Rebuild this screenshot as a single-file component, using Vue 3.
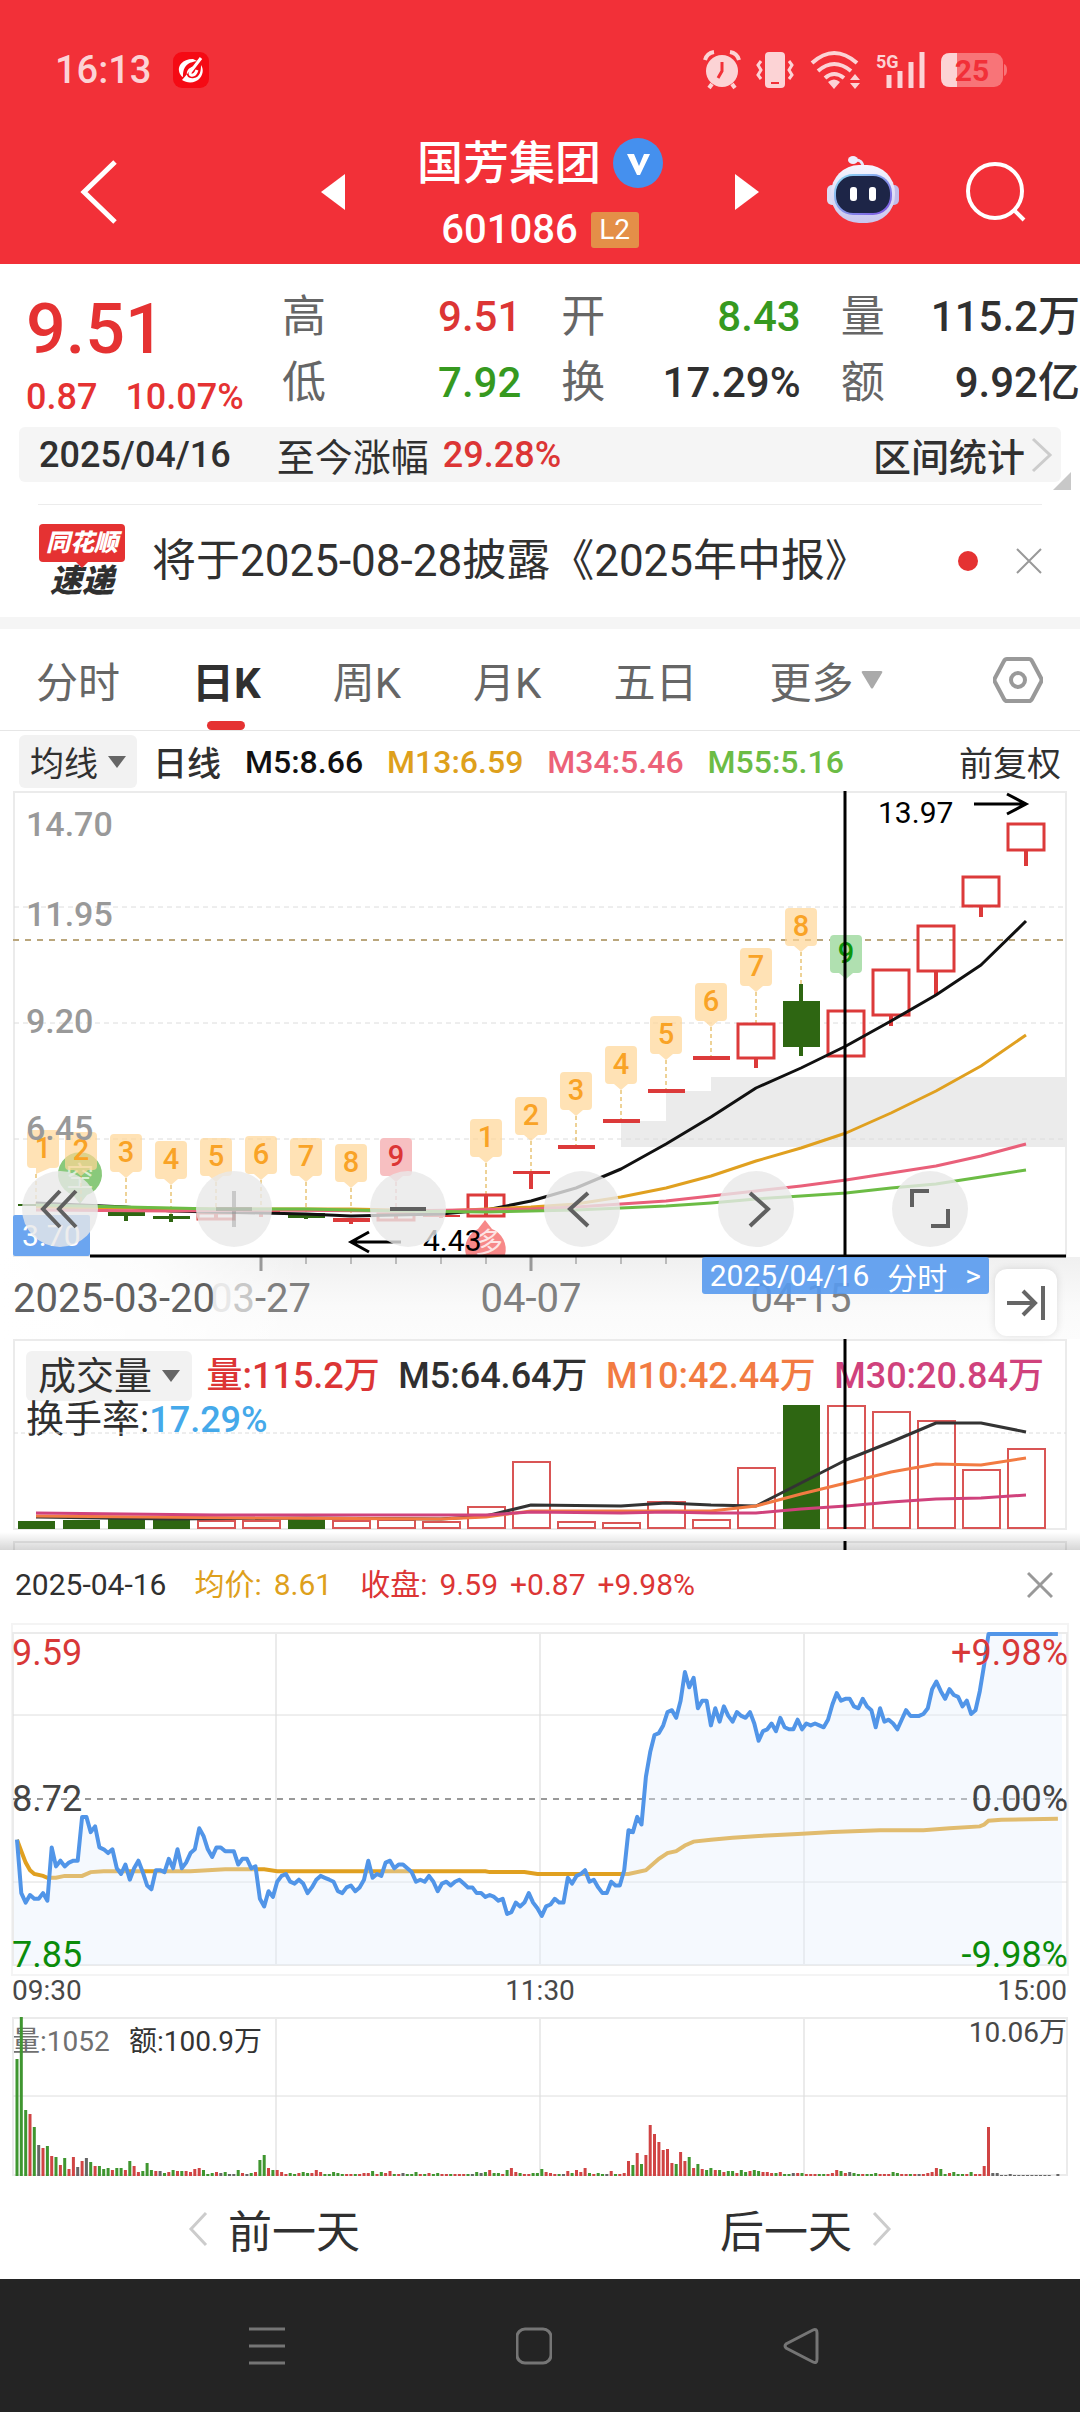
<script setup>
import { ref } from 'vue'

const tabs = ['分时', '日K', '周K', '月K', '五日']
const activeTab = ref('日K')

const quotes = [
  { label: '高', value: '9.51', tone: 'up' },
  { label: '开', value: '8.43', tone: 'down' },
  { label: '量', value: '115.2万', tone: '' },
  { label: '低', value: '7.92', tone: 'down' },
  { label: '换', value: '17.29%', tone: '' },
  { label: '额', value: '9.92亿', tone: '' },
]

const RED = '#dc3a3a'
const GREEN = '#2e6612'
const cx = (i) => 36 + i * 45

// Daily candles: kind, body top, body bottom, wick top, wick bottom
const candles = [
  ['g', 1204, 1206, 1204, 1206], ['g', 1206, 1209, 1206, 1210], ['g', 1211, 1216, 1211, 1221],
  ['g', 1216, 1219, 1214, 1222], ['r', 1213, 1219, 1213, 1219], ['f', 1210, 1212, 1210, 1217],
  ['g', 1213, 1218, 1213, 1219], ['f', 1218, 1222, 1218, 1224], ['r', 1214, 1220, 1214, 1220],
  ['f', 1215, 1217, 1215, 1218], ['r', 1195, 1216, 1195, 1216], ['f', 1171, 1174, 1171, 1189],
  ['f', 1145, 1149, 1145, 1149], ['f', 1119, 1123, 1119, 1123], ['f', 1089, 1093, 1089, 1093],
  ['f', 1056, 1060, 1056, 1060], ['r', 1024, 1058, 1058, 1068], ['g', 1001, 1047, 984, 1056],
  ['r', 1011, 1056, 1056, 1057], ['r', 970, 1015, 1015, 1026], ['r', 926, 971, 971, 995],
  ['r', 877, 906, 906, 917], ['r', 824, 850, 850, 866],
]

const toPoints = (pairs) => pairs.map(([i, y]) => `${cx(i)},${y}`).join(' ')
const averages = [
  { color: '#111', pts: [[0, 1203], [2, 1207], [3, 1211], [5, 1213], [6, 1214], [7, 1216], [8, 1215], [9, 1214], [10, 1210], [11, 1201], [12, 1188], [13, 1169], [14, 1144], [15, 1117], [16, 1088], [17, 1068], [18, 1046], [19, 1021], [20, 995], [21, 965], [22, 921]] },
  { color: '#e0a020', pts: [[0, 1207], [4, 1209], [7, 1209], [9, 1211], [11, 1207], [12, 1204], [13, 1197], [14, 1188], [15, 1176], [16, 1161], [17, 1148], [18, 1133], [19, 1113], [20, 1091], [21, 1066], [22, 1035]] },
  { color: '#e9607a', pts: [[0, 1210], [3, 1211], [5, 1210], [8, 1211], [11, 1209], [12, 1207], [13, 1204], [14, 1201], [15, 1196], [16, 1191], [17, 1186], [18, 1180], [19, 1173], [20, 1166], [21, 1156], [22, 1144]] },
  { color: '#6cbc45', pts: [[0, 1205], [2, 1207], [4, 1209], [6, 1209], [8, 1211], [10, 1212], [12, 1210], [13, 1208], [14, 1206], [15, 1203], [16, 1199], [17, 1196], [18, 1193], [19, 1188], [20, 1184], [21, 1177], [22, 1170]] },
].map((a) => ({ color: a.color, points: toPoints(a.pts) }))

// Nine-turn markers: candle index, number, bubble top, stem end, tone
const marks = [
  [0, 1, 1130, 1204, 'o'], [1, 2, 1132, 1206, 'o'], [2, 3, 1134, 1209, 'o'], [3, 4, 1141, 1215, 'o'],
  [4, 5, 1138, 1212, 'o'], [5, 6, 1136, 1210, 'o'], [6, 7, 1138, 1212, 'o'], [7, 8, 1144, 1217, 'o'],
  [8, 9, 1138, 1213, 'r'], [10, 1, 1119, 1194, 'o'], [11, 2, 1097, 1171, 'o'], [12, 3, 1072, 1146, 'o'],
  [13, 4, 1046, 1120, 'o'], [14, 5, 1016, 1090, 'o'], [15, 6, 983, 1057, 'o'], [16, 7, 948, 1023, 'o'],
  [17, 8, 908, 984, 'o'], [18, 9, 935, 976, 'g'],
].map(([i, n, y, end, tone]) => ({ x: cx(i), bx: Math.max(cx(i), 43), n, y, end, tone }))

const volumes = [
  ['g', 1521], ['g', 1520], ['g', 1519], ['g', 1519], ['r', 1521], ['r', 1521], ['g', 1519], ['r', 1521],
  ['r', 1520], ['r', 1522], ['r', 1507], ['r', 1462], ['r', 1522], ['r', 1523], ['r', 1502], ['r', 1520],
  ['r', 1468], ['g', 1405], ['r', 1406], ['r', 1412], ['r', 1421], ['r', 1470], ['r', 1449],
]
const volumeAverages = [
  { color: '#333', pts: [[0, 1517], [3, 1519], [6, 1518], [9, 1519], [10, 1516], [11, 1505], [13, 1506], [14, 1503], [15, 1505], [16, 1506], [17, 1483], [18, 1460], [19, 1442], [20, 1423], [21, 1423], [22, 1432]] },
  { color: '#f27b42', pts: [[0, 1516], [5, 1518], [9, 1519], [10, 1517], [11, 1511], [13, 1511], [15, 1511], [16, 1506], [17, 1494], [18, 1483], [19, 1472], [20, 1464], [21, 1465], [22, 1458]] },
  { color: '#d0427c', pts: [[0, 1513], [4, 1515], [10, 1515], [11, 1512], [13, 1513], [14, 1512], [15, 1513], [16, 1513], [17, 1509], [18, 1506], [19, 1502], [20, 1499], [21, 1498], [22, 1495]] },
].map((a) => ({ color: a.color, points: toPoints(a.pts) }))

// Intraday price per minute, in cents
const prices = [
  851, 823, 818, 822, 820, 820, 823, 819, 847, 837, 840, 837, 839, 840, 840, 863, 863, 855, 858, 847,
  846, 844, 846, 836, 833, 838, 830, 836, 840, 834, 827, 825, 835, 835, 834, 841, 836, 846, 836, 839,
  844, 846, 857, 853, 846, 842, 847, 847, 845, 845, 845, 838, 841, 841, 836, 837, 820, 816, 824, 821,
  829, 832, 833, 829, 828, 830, 828, 823, 826, 830, 832, 831, 830, 829, 824, 823, 826, 827, 824, 826,
  830, 840, 831, 833, 832, 839, 840, 836, 838, 838, 836, 834, 829, 830, 829, 832, 829, 824, 828, 829,
  827, 829, 830, 828, 826, 826, 823, 823, 821, 822, 821, 819, 820, 812, 813, 818, 816, 818, 823, 818,
  815, 811, 816, 817, 820, 818, 818, 831, 828, 832, 833, 835, 829, 830, 826, 823, 823, 829, 827, 827,
  835, 856, 855, 863, 859, 884, 897, 906, 907, 911, 918, 919, 915, 924, 939, 931, 936, 920, 924, 924,
  911, 920, 913, 921, 916, 913, 918, 916, 915, 918, 912, 903, 908, 909, 912, 908, 915, 910, 909, 909,
  914, 909, 912, 911, 912, 911, 910, 914, 922, 928, 924, 925, 925, 921, 920, 925, 921, 919, 910, 920,
  913, 914, 912, 909, 914, 919, 916, 916, 916, 917, 920, 930, 934, 929, 925, 930, 927, 926, 921, 924,
  917, 919, 929, 943, 959, ...Array(16).fill(959),
]
const mean = [
  [0, 851], [1, 845], [2, 839], [3, 835], [4, 833], [6, 832], [7, 831], [9, 831], [11, 832], [15, 832], [17, 834],
  [20, 834.5], [40, 834.5], [48, 835.5], [57, 835.5], [60, 834.5], [108, 834.5], [109, 834], [117, 834], [120, 833],
  [141, 833], [145, 835], [148, 841], [150, 844], [152, 845], [154, 848], [156, 850], [160, 851], [165, 852],
  [171, 853], [180, 854], [188, 855], [199, 856], [209, 856], [215, 857], [222, 858], [223, 859], [224, 861],
  [227, 861.5], [240, 862],
]
const mx = (m) => +(17 + m * 4.337).toFixed(1)
const py = (cents) => +(1634 + (959 - cents) * 1.905).toFixed(1)
const priceLine = prices.map((p, m) => `${mx(m)},${py(p)}`).join(' ')
const priceArea = `14,${py(851)} ${priceLine} 1062,1634 1062,1965 14,1965`
const meanLine = mean.map(([m, p]) => `${mx(m)},${py(p)}`).join(' ')

// Volume per minute: direction and bar height
const ticks = (
  'g117 g159 g66 r62 g49 k31 r28 g30 r20 g19 r11 g18 r7 r19 k9 r15 k18 g14 r10 g10 g7 g8 r6 g8 g8 r6 g15 r10 r4 g5 ' +
  'g13 g6 r5 k5 g3 r4 g6 r5 g5 r5 r4 r7 r8 g6 g2 g3 r4 k3 g4 k2 k2 g6 r3 k2 g3 r4 g16 g21 r8 g6 ' +
  'r6 r4 r2 g3 g2 r3 g4 g3 r3 r6 r4 g2 g2 g4 g3 g2 r2 r2 g2 r2 r3 r3 g5 r2 g4 r3 r5 g2 r2 k3 ' +
  'g2 g2 g4 r2 g2 r3 g2 g3 r2 r2 g2 r2 r2 r2 g2 k2 g4 k3 g4 r6 g3 g3 r2 g6 r8 r4 g3 r2 r2 g3 ' +
  'g3 g7 r4 r3 r2 g2 k2 r5 g3 r6 r4 r8 g3 r2 g3 g2 k2 r5 g2 r2 r3 r15 g11 r23 g12 r21 r51 r42 r34 r26 ' +
  'r27 r13 g12 r24 r15 g19 r8 g12 r7 g6 g8 r6 g6 r4 g5 g5 r3 g6 g4 r5 g6 g5 r4 r4 r3 g3 r4 g2 g2 k3 ' +
  'r3 g3 r2 r2 r2 g2 g2 r2 r3 r6 g5 r3 k4 g3 g2 r2 g2 g2 g3 r2 r2 r2 g4 g3 r2 r2 g2 r2 k2 r2 ' +
  'r3 r4 r8 g7 g2 r3 g4 g2 g2 r2 g4 r2 r2 r10 r49 k3 k3 k1 k1 k2 k1 k1 k1 k1 k1 k1 k1 k1 k1 k0 k2'
).split(' ').map((t, m) => ({ x: mx(m) - 1.5, h: +t.slice(1), color: { g: '#3f9630', r: '#d04444', k: '#666' }[t[0]] }))
</script>

<template>
  <div class="page">
    <header class="top">
      <div class="status">
        <span class="clock">16:13</span>
        <svg class="app-dot" width="36" height="36" viewBox="0 0 36 36">
          <rect width="36" height="36" rx="9" fill="#f50a14" />
          <path d="M20 7C9 7 5 14 6 19s4 6 4 6-1-9 5-13c3-2 5-2 9-3M9 28c6 4 14 3 18-2s3-10 1-13c0 6-1 12-7 13-5 1-8-2-7-6s5-5 7-6" fill="#fff" />
          <path d="M28 6 18 19q-2 3 0 4 4 1 6-5" fill="none" stroke="#fff" stroke-width="3" />
        </svg>
        <div class="status-icons">
          <svg width="38" height="40" viewBox="0 0 38 40">
            <circle cx="19" cy="21" r="16" fill="#fcd3d5" />
            <path d="M2 10q2-7 9-8M36 10q-2-7-9-8M9 34l-3 4M29 34l3 4" stroke="#fcd3d5" stroke-width="4" fill="none" />
            <path d="M19 12v9l-4 7" stroke="#f23038" stroke-width="3" fill="none" />
          </svg>
          <svg width="38" height="40" viewBox="0 0 38 40">
            <rect x="9" y="2" width="20" height="36" rx="4" fill="#fcd3d5" />
            <rect x="15" y="32" width="8" height="2" fill="#f23038" />
            <path d="M5 11l-3 4 3 5-3 5 3 4M33 11l3 4-3 5 3 5-3 4" stroke="#fcd3d5" stroke-width="3" fill="none" />
          </svg>
          <svg width="52" height="40" viewBox="0 0 52 40">
            <path d="M3 13q22-20 45 0M9 21q16-14 33 0M16 28q9-8 19 0" stroke="#fcd3d5" stroke-width="4" fill="none" />
            <path d="M19 32q6-5 12 0l-6 7z" fill="#fcd3d5" />
            <path d="M41 30l5-6 5 6zM41 33l5 6 5-6z" fill="#fcd3d5" />
          </svg>
          <svg width="50" height="40" viewBox="0 0 50 40">
            <text x="0" y="18" class="five-g">5G</text>
            <path d="M13 25v13M24 21v17M35 12v26M46 2v36" stroke="#fcd3d5" stroke-width="5" />
          </svg>
          <svg width="66" height="36" viewBox="0 0 66 36">
            <rect x="0" y="1" width="62" height="34" rx="9" fill="#f87478" />
            <path d="M9 1h7v34H9q-9 0-9-9V10q0-9 9-9z" fill="#fcd3d5" />
            <path d="M63 12q3 1 3 6t-3 6z" fill="#f87478" />
            <text x="31" y="29" class="battery">25</text>
          </svg>
        </div>
      </div>
      <div class="title-bar">
        <div class="side left">
          <button aria-label="返回">
            <svg width="38" height="66" viewBox="0 0 38 66"><path d="M35 3 4 33l31 30" fill="none" stroke="#fff" stroke-width="5" /></svg>
          </button>
          <button aria-label="上一只">
            <svg width="24" height="36" viewBox="0 0 24 36"><path d="M24 0v36L0 18z" fill="#fff" /></svg>
          </button>
        </div>
        <div class="stock">
          <h1>国芳集团
            <svg width="50" height="50" viewBox="0 0 50 50">
              <circle cx="25" cy="25" r="25" fill="#4590ee" />
              <path d="M14 16h7l5 12 5-12h6L27 37h-3z" fill="#fff" />
            </svg>
          </h1>
          <div class="code">601086<span class="level">L2</span></div>
        </div>
        <div class="side right">
          <button aria-label="下一只">
            <svg width="24" height="36" viewBox="0 0 24 36"><path d="M0 0v36l24-18z" fill="#fff" /></svg>
          </button>
          <button aria-label="智能助手">
            <svg width="72" height="74" viewBox="0 0 72 74">
              <defs>
                <linearGradient id="shell" x1="0" y1="0" x2="0" y2="1">
                  <stop offset="0" stop-color="#f6f6ff" />
                  <stop offset="1" stop-color="#c8c6ee" />
                </linearGradient>
                <linearGradient id="rim" x1="0" y1="0" x2="1" y2="1">
                  <stop offset="0" stop-color="#8fe0f5" />
                  <stop offset="1" stop-color="#7a4ee0" />
                </linearGradient>
              </defs>
              <path d="M36 13q0-9-9-8" fill="none" stroke="#e8e8fa" stroke-width="3" />
              <ellipse cx="26" cy="5" rx="5" ry="4" fill="#eef" />
              <rect x="0" y="30" width="12" height="20" rx="5" fill="#dcdcf4" />
              <rect x="60" y="30" width="12" height="20" rx="5" fill="#c0bcea" />
              <rect x="4" y="10" width="64" height="58" rx="28" fill="url(#shell)" />
              <rect x="7" y="19" width="58" height="41" rx="19" fill="url(#rim)" />
              <rect x="9" y="21" width="54" height="37" rx="17" fill="#1d2547" />
              <rect x="23" y="32" width="7" height="14" rx="3" fill="#fff" />
              <rect x="42" y="32" width="7" height="14" rx="3" fill="#fff" />
            </svg>
          </button>
          <button aria-label="搜索">
            <svg width="60" height="60" viewBox="0 0 60 60">
              <circle cx="29" cy="29" r="27" fill="none" stroke="#fff" stroke-width="4" />
              <path d="M48 48l10 10" stroke="#fff" stroke-width="4" />
            </svg>
          </button>
        </div>
      </div>
    </header>

    <section class="quote">
      <div class="price">
        <strong>9.51</strong>
        <div class="change"><span>0.87</span><span>10.07%</span></div>
      </div>
      <dl class="figures">
        <div v-for="q in quotes" :key="q.label">
          <dt>{{ q.label }}</dt>
          <dd :class="q.tone">{{ q.value }}</dd>
        </div>
      </dl>
    </section>

    <div class="range">
      <span>2025/04/16</span>
      <span class="since">至今涨幅</span>
      <span class="up">29.28%</span>
      <button class="stats">区间统计
        <svg width="22" height="36" viewBox="0 0 22 36"><path d="M2 2l17 16L2 34" fill="none" stroke="#ccc" stroke-width="3" /></svg>
      </button>
      <svg class="corner" width="18" height="18" viewBox="0 0 18 18"><path d="M18 0v18H0z" fill="#c8c8c8" /></svg>
    </div>

    <div class="news">
      <div class="brand">
        <span class="brand-top">同花顺</span>
        <span class="brand-bottom">速递</span>
      </div>
      <a href="#report">将于2025-08-28披露《2025年中报》</a>
      <i class="unread"></i>
      <button aria-label="关闭公告">
        <svg width="26" height="26" viewBox="0 0 26 26"><path d="M1 1l24 24M25 1 1 25" stroke="#999" stroke-width="2" /></svg>
      </button>
    </div>

    <nav class="tabs">
      <button v-for="t in tabs" :key="t" :class="{ active: t === activeTab }" @click="activeTab = t">{{ t }}</button>
      <button class="more">更多
        <svg width="22" height="18" viewBox="0 0 22 18"><path d="M2 0h18q2 0 1 2L12 17q-1 1-2 0L1 2q-1-2 1-2z" fill="#aaa" /></svg>
      </button>
      <button class="settings" aria-label="设置">
        <svg width="50" height="46" viewBox="0 0 50 46">
          <path d="M14 2h22q2 0 3 2l9 17q1 2 0 4l-9 17q-1 2-3 2H14q-2 0-3-2L2 25q-1-2 0-4l9-17q1-2 3-2z" fill="none" stroke="#999" stroke-width="4" />
          <circle cx="25" cy="23" r="7" fill="none" stroke="#999" stroke-width="4" />
        </svg>
      </button>
    </nav>

    <div class="legend">
      <button class="chip">均线
        <svg width="18" height="12" viewBox="0 0 18 12"><path d="M0 0h18l-9 12z" fill="#666" /></svg>
      </button>
      <span class="period">日线</span>
      <span class="ma black">M5:8.66</span>
      <span class="ma gold">M13:6.59</span>
      <span class="ma pink">M34:5.46</span>
      <span class="ma lime">M55:5.16</span>
      <button class="adjust">前复权</button>
    </div>

    <section class="daily">
      <svg class="chart" viewBox="0 790 1080 549">
        <defs>
          <linearGradient id="axisShade" x1="0" y1="0" x2="0" y2="1">
            <stop offset="0" stop-color="#f0f0f0" />
            <stop offset="0.6" stop-color="#fafafa" />
            <stop offset="1" stop-color="#fcfcfc" />
          </linearGradient>
          <linearGradient id="axisLeft" x1="0" y1="0" x2="1" y2="0">
            <stop offset="0" stop-color="#fff" />
            <stop offset="0.5" stop-color="#fff" stop-opacity="0.8" />
            <stop offset="1" stop-color="#fff" stop-opacity="0" />
          </linearGradient>
        </defs>
        <rect x="14" y="792" width="1052" height="464" fill="none" stroke="#ebebeb" stroke-width="2" />
        <path d="M621 1147V1121H666V1091H711V1077H1066V1147z" fill="#ebebeb" />
        <path d="M14 907H1066M14 1023H1066M14 1139H1066" stroke="#dcdcdc" stroke-dasharray="5 4" fill="none" />
        <path d="M13 940H1066" stroke="#baa67c" stroke-width="2" stroke-dasharray="6 6" />

        <g class="axis-label">
          <text x="26" y="836">14.70</text>
          <text x="26" y="926">11.95</text>
          <text x="26" y="1033">9.20</text>
        </g>

        <path d="M80 1204l-7-9a22 22 0 1 1 14 0z" fill="#6cbc5a" opacity=".8" />
        <text x="80" y="1187" class="pin" fill="#d9efd2">空</text>
        <path d="M485 1220l7 9a22 22 0 0 1 13 26H466a22 22 0 0 1 12-26z" fill="#f78888" />
        <text x="489" y="1253" class="pin" fill="#fde4e4">多</text>

        <g v-for="m in marks" :key="'m' + m.x">
          <path v-if="m.tone !== 'g'" :d="`M${m.x} ${m.y + 44}V${m.end}`" :stroke="m.tone === 'r' ? '#dc6a6a' : '#dca52e'" stroke-dasharray="4 3" />
          <path :class="['bubble', m.tone]" :d="`M${m.bx - 12} ${m.y}h24q4 0 4 4v30q0 4 -4 4h-5l${m.x - m.bx - 7} 6l${m.bx - m.x - 7} -6h-5q-4 0 -4 -4v-30q0 -4 4 -4z`" />
          <text :class="['count', m.tone]" :x="m.bx" :y="m.y + 28">{{ m.n }}</text>
        </g>
        <text class="axis-label" x="26" y="1140">6.45</text>

        <g v-for="(c, i) in candles" :key="'c' + i">
          <path :d="`M${cx(i)} ${c[3]}V${c[4]}`" :stroke="c[0] === 'g' ? GREEN : RED" stroke-width="4" />
          <rect v-if="c[0] === 'r'" :x="cx(i) - 18" :y="c[1]" width="36" :height="c[2] - c[1]" fill="none" :stroke="RED" stroke-width="3" />
          <rect v-else :x="cx(i) - 18" :y="c[1]" width="37" :height="c[2] - c[1]" :fill="c[0] === 'g' ? GREEN : RED" />
        </g>
        <polyline v-for="a in averages" :key="a.color" :points="a.points" fill="none" :stroke="a.color" stroke-width="3" stroke-linejoin="round" />

        <g class="extreme">
          <text x="878" y="823">13.97</text>
          <text x="423" y="1251">4.43</text>
          <path d="M974 804h51M1007 794l19 10-19 10M401 1242h-50M369 1232l-18 10 18 10" />
        </g>

        <rect x="0" y="1257" width="1080" height="82" fill="url(#axisShade)" />
        <rect x="0" y="1257" width="300" height="82" fill="url(#axisLeft)" />
        <path d="M306 1257v7M351 1257v7M396 1257v7M441 1257v7M486 1257v7M576 1257v7M621 1257v7M666 1257v7" stroke="#bbb" stroke-width="2" />
        <path d="M261 1257v14M531 1257v14" stroke="#999" stroke-width="3" />
        <g class="dates">
          <text x="311" y="1312" text-anchor="end"><tspan fill="#e8e8e8">0</tspan><tspan fill="#c8c8c8">3</tspan>-27</text>
          <text x="531" y="1312" text-anchor="middle">04-07</text>
          <text x="801" y="1312" text-anchor="middle">04-15</text>
          <text x="13" y="1312" class="first">2025-03-20</text>
        </g>
        <path d="M90 1256H1066" stroke="#000" stroke-width="3" />
        <path d="M845 791V1257" stroke="#000" stroke-width="3" />
        <rect x="13" y="1215" width="77" height="41" rx="2" fill="#6ba5f0" />
        <text x="22" y="1246" class="floor">3.70</text>
      </svg>

      <div class="controls">
        <button aria-label="最早">
          <svg width="40" height="40" viewBox="0 0 40 40"><path d="M20 2 3 20l17 18M36 2 19 20l17 18" /></svg>
        </button>
        <button aria-label="放大">
          <svg class="faint" width="40" height="40" viewBox="0 0 40 40"><path d="M2 20h36M20 2v36" /></svg>
        </button>
        <button aria-label="缩小">
          <svg width="40" height="40" viewBox="0 0 40 40"><path d="M2 20h36" /></svg>
        </button>
        <button aria-label="左移">
          <svg width="40" height="40" viewBox="0 0 40 40"><path d="M26 4 8 20l18 17" /></svg>
        </button>
        <button aria-label="右移">
          <svg width="40" height="40" viewBox="0 0 40 40"><path d="M14 4l18 16-18 17" /></svg>
        </button>
        <button aria-label="全屏">
          <svg width="40" height="40" viewBox="0 0 40 40"><path d="M2 18V2h17M38 20v17H21" /></svg>
        </button>
      </div>
      <button class="day-tag"><span>2025/04/16</span><span>分时</span><span>&gt;</span></button>
      <button class="to-latest" aria-label="最新">
        <svg width="40" height="36" viewBox="0 0 40 36"><path d="M1 18h26M17 6l12 12-12 12M37 1v34" fill="none" stroke="#666" stroke-width="4" /></svg>
      </button>
    </section>

    <section class="volume">
      <div class="volume-labels">
        <button class="chip">成交量
          <svg width="18" height="12" viewBox="0 0 18 12"><path d="M0 0h18l-9 12z" fill="#666" /></svg>
        </button>
        <span class="ma up">量:115.2万</span>
        <span class="ma">M5:64.64万</span>
        <span class="ma orange">M10:42.44万</span>
        <span class="ma magenta">M30:20.84万</span>
        <div class="turnover">换手率:<span>17.29%</span></div>
      </div>
      <svg class="chart over" viewBox="0 1339 1080 211">
        <defs>
          <linearGradient id="sheetShade" x1="0" y1="0" x2="0" y2="1">
            <stop offset="0" stop-color="#000" stop-opacity="0" />
            <stop offset="1" stop-color="#000" stop-opacity=".16" />
          </linearGradient>
        </defs>
        <path d="M14 1529V1340H1066V1529zM14 1550V1542H1066V1550" fill="none" stroke="#ebebeb" stroke-width="2" />
        <path d="M14 1433H1066" stroke="#dcdcdc" stroke-dasharray="4 3" />
        <g v-for="(v, i) in volumes" :key="'v' + i">
          <rect v-if="v[0] === 'g'" :x="cx(i) - 18" :y="v[1]" width="37" :height="1529 - v[1]" :fill="GREEN" />
          <rect v-else :x="cx(i) - 18" :y="v[1]" width="37" :height="1528 - v[1]" fill="none" stroke="#d95555" stroke-width="2" />
        </g>
        <polyline v-for="a in volumeAverages" :key="a.color" :points="a.points" fill="none" :stroke="a.color" stroke-width="3" stroke-linejoin="round" />
        <path d="M845 1339V1529M845 1541V1550" stroke="#000" stroke-width="3" />
        <rect x="0" y="1532" width="1080" height="18" fill="url(#sheetShade)" />
      </svg>
    </section>

    <section class="sheet">
      <div class="sheet-head">
        <p>2025-04-16</p>
        <p class="gold"><span>均价:</span><span>8.61</span></p>
        <p class="up"><span>收盘:</span><span>9.59</span><span>+0.87</span><span>+9.98%</span></p>
        <button aria-label="关闭">
          <svg width="26" height="28" viewBox="0 0 26 28"><path d="M1 2l24 24M25 2 1 26" stroke="#999" stroke-width="3" /></svg>
        </button>
      </div>
      <svg class="chart" viewBox="0 1620 1080 558">
        <rect x="12" y="1624" width="1056" height="351" fill="none" stroke="#f4f4f4" stroke-width="2" />
        <path d="M13 1633H1067V1965H13zM276 1633V1965M540 1633V1965M804 1633V1965" fill="none" stroke="#ebebeb" stroke-width="2" />
        <path d="M13 1715H1067M13 1882H1067" stroke="#dedede" />
        <path d="M13 1799H1067" stroke="#999" stroke-width="2" stroke-dasharray="6 6" />
        <polyline :points="meanLine" fill="none" stroke="#e0a020" stroke-width="4" />
        <polygon :points="priceArea" fill="#e3effc" opacity=".36" />
        <polyline :points="priceLine" fill="none" stroke="#5195e8" stroke-width="4" stroke-linejoin="round" />
        <g class="scale">
          <text x="12" y="1665" fill="#d83838">9.59</text>
          <text x="12" y="1811">8.72</text>
          <text x="12" y="1967" fill="#0b8c0b">7.85</text>
          <text x="1068" y="1665" fill="#d83838" text-anchor="end">+9.98%</text>
          <text x="1068" y="1811" text-anchor="end">0.00%</text>
          <text x="1068" y="1967" fill="#0b8c0b" text-anchor="end">-9.98%</text>
        </g>
        <g class="time">
          <text x="12" y="2000">09:30</text>
          <text x="540" y="2000" text-anchor="middle">11:30</text>
          <text x="1067" y="2000" text-anchor="end">15:00</text>
          <text x="12" y="2051" fill="#707070">量:1052</text>
          <text x="129" y="2051" fill="#333">额:100.9万</text>
          <text x="1067" y="2042" text-anchor="end">10.06万</text>
        </g>
        <path d="M13 2018H1067V2175H13zM276 2018V2175M540 2018V2175M804 2018V2175" fill="none" stroke="#ebebeb" stroke-width="2" />
        <path d="M13 2096H1067" stroke="#dedede" />
        <rect v-for="(t, m) in ticks" :key="m" :x="t.x" :y="2176 - t.h" width="3" :height="t.h" :fill="t.color" />
      </svg>
      <div class="day-nav">
        <button>
          <svg width="20" height="36" viewBox="0 0 20 36"><path d="M18 2 3 18l15 16" fill="none" stroke="#ccc" stroke-width="3" /></svg>
          前一天
        </button>
        <button>
          后一天
          <svg width="20" height="36" viewBox="0 0 20 36"><path d="M2 2l15 16L2 34" fill="none" stroke="#ccc" stroke-width="3" /></svg>
        </button>
      </div>
    </section>

    <footer class="system">
      <button aria-label="最近任务">
        <svg width="36" height="38" viewBox="0 0 36 38"><path d="M0 2h36M0 19h36M0 36h36" stroke="#757575" stroke-width="3" /></svg>
      </button>
      <button aria-label="主屏幕">
        <svg width="36" height="38" viewBox="0 0 36 38"><rect x="1" y="2" width="34" height="34" rx="8" fill="none" stroke="#757575" stroke-width="3" /></svg>
      </button>
      <button aria-label="后退">
        <svg width="36" height="38" viewBox="0 0 36 38"><path d="M30 3 3 17q-2 2 0 4l27 14q4 2 4-3V6q0-5-4-3z" fill="none" stroke="#757575" stroke-width="3" /></svg>
      </button>
    </footer>
  </div>
</template>

<style>
body {
  margin: 0;
  background: #fff;
}
</style>

<style scoped>
.page {
  font-family: Roboto, "Noto Sans CJK SC", sans-serif;
  color: #303030;
  background: #fff;
  overflow-x: hidden;
}
button {
  display: flex;
  align-items: center;
  padding: 0;
  border: 0;
  background: none;
  font: inherit;
  color: inherit;
  white-space: nowrap;
}
svg {
  display: block;
  flex: none;
}
.up { color: #dc3535; }
.down { color: #36991f; }
.black { color: #111; }
.gold { color: #dea01c; }
.pink { color: #ec6278; }
.lime { color: #6cbc45; }
.orange { color: #f27b42; }
.magenta { color: #d0427c; }

.top {
  padding: 50px 0 16px;
  background: #f23038;
  color: #fff;
}
.status {
  display: flex;
  align-items: center;
  height: 40px;
  padding: 0 73px 0 55px;
}
.clock {
  font-size: 38px;
  font-weight: 500;
  line-height: 40px;
  color: #fcd3d5;
}
.app-dot { margin-left: 22px; }
.status-icons {
  display: flex;
  align-items: center;
  gap: 15px;
  margin-left: auto;
}
.five-g {
  font-size: 18px;
  font-weight: 700;
  fill: #fcd3d5;
}
.battery {
  font-size: 30px;
  font-weight: 700;
  text-anchor: middle;
  fill: #f23038;
}
.title-bar {
  display: grid;
  grid-template-columns: 1fr 390px 1fr;
  align-items: center;
  margin-top: 46px;
}
.side {
  display: flex;
  align-items: center;
  justify-content: space-between;
}
.side.left { padding-left: 80px; }
.side.right { padding-right: 54px; }
.stock {
  display: flex;
  flex-direction: column;
  align-items: center;
  gap: 22px;
}
h1 {
  display: flex;
  align-items: center;
  gap: 12px;
  margin: 0;
  font-size: 46px;
  font-weight: 500;
  line-height: 54px;
}
.code {
  display: flex;
  align-items: center;
  gap: 13px;
  font-size: 40px;
  font-weight: 500;
  line-height: 36px;
}
.level {
  width: 48px;
  border-radius: 3px;
  background: #e48f48;
  font-size: 28px;
  font-weight: 400;
  text-align: center;
}

.quote {
  display: flex;
  padding: 31px 0 12px 26px;
}
.price {
  flex: none;
  width: 256px;
  color: #e53232;
}
.price strong {
  display: block;
  font-size: 70px;
  font-weight: 500;
  line-height: 68px;
}
.change {
  display: flex;
  gap: 28px;
  margin-top: 16px;
  font-size: 36px;
  font-weight: 500;
  line-height: 36px;
}
.figures {
  display: grid;
  flex: 1;
  align-content: start;
  grid-template-columns: repeat(3, 1fr);
  gap: 22px 40px;
  margin: 0;
}
.figures div {
  display: flex;
  justify-content: space-between;
}
dt {
  color: #666;
  font-size: 44px;
  line-height: 44px;
}
dd {
  margin: 0;
  font-size: 42px;
  font-weight: 500;
  line-height: 44px;
  white-space: nowrap;
}

.range {
  position: relative;
  display: flex;
  align-items: center;
  height: 55px;
  margin: 0 19px;
  padding: 0 8px 0 20px;
  border-radius: 6px;
  background: #f5f5f5;
  font-size: 36px;
  font-weight: 500;
}
.since {
  margin: 0 14px 0 46px;
  font-size: 38px;
  font-weight: 400;
}
.stats {
  gap: 6px;
  margin-left: auto;
  font-size: 38px;
}
.corner {
  position: absolute;
  right: -10px;
  bottom: -8px;
}

.news {
  display: flex;
  align-items: center;
  height: 112px;
  margin: 22px 38px 0;
  border-top: 1px solid #ececec;
}
.brand {
  display: flex;
  flex-direction: column;
  align-items: center;
  gap: 2px;
  width: 88px;
  font-style: italic;
  font-weight: 900;
}
.brand-top {
  position: relative;
  width: 86px;
  border-radius: 4px;
  background: #e53232;
  color: #fff;
  font-size: 24px;
  line-height: 38px;
  text-align: center;
}
.brand-top::after {
  content: "";
  position: absolute;
  top: 100%;
  left: 50%;
  margin-left: -6px;
  border: 6px solid transparent;
  border-top-color: #e53232;
  border-bottom: 0;
}
.brand-bottom {
  font-size: 32px;
  line-height: 34px;
}
.news a {
  margin-left: 26px;
  color: #303030;
  font-size: 44px;
  line-height: 52px;
  text-decoration: none;
  white-space: nowrap;
}
.unread {
  width: 20px;
  height: 20px;
  margin: 0 38px 0 auto;
  border-radius: 50%;
  background: #e53232;
}

.tabs {
  display: flex;
  align-items: center;
  gap: 72px;
  height: 101px;
  padding: 0 37px 0 36px;
  border-top: 12px solid #f5f5f5;
  border-bottom: 1px solid #e6e6e6;
  color: #666;
  font-size: 42px;
}
.tabs button {
  position: relative;
  height: 100%;
}
.tabs .active {
  color: #303030;
  font-weight: 700;
}
.tabs .active::after {
  content: "";
  position: absolute;
  bottom: 0;
  left: 50%;
  width: 38px;
  height: 9px;
  margin-left: -19px;
  border-radius: 5px;
  background: #e53232;
}
.more { gap: 8px; }
.tabs .settings { margin-left: auto; }

.legend {
  display: flex;
  align-items: center;
  padding: 4px 19px 2px;
  font-size: 34px;
}
.chip {
  gap: 10px;
  height: 53px;
  padding: 0 12px;
  border-radius: 6px;
  background: #f2f2f2;
}
.legend .chip { padding: 0 11px; }
.period {
  margin-left: 16px;
  font-weight: 500;
}
.legend .ma {
  margin-left: 24px;
  font-size: 32px;
  font-weight: 500;
}
.adjust { margin-left: auto; }

.daily, .volume { position: relative; }
.chart {
  width: 100%;
  height: auto;
}
.axis-label {
  fill: #999;
  font-size: 34px;
  font-weight: 500;
}
.pin {
  font-size: 28px;
  text-anchor: middle;
}
.bubble { fill: rgba(255, 214, 150, 0.7); }
.bubble.r { fill: #f7bfc1; }
.bubble.g { fill: #b0e0b0; }
.count {
  fill: #f9a326;
  font-size: 29px;
  font-weight: 500;
  text-anchor: middle;
}
.count.r { fill: #dc3535; }
.count.g { fill: #0c960c; }
.extreme { font-size: 30px; }
.extreme path {
  fill: none;
  stroke: #000;
  stroke-width: 3;
}
.dates {
  fill: #808080;
  font-size: 40px;
}
.dates .first { fill: #606060; }
.floor {
  fill: #fff;
  font-size: 30px;
}
.controls {
  position: absolute;
  right: 112px;
  bottom: 92px;
  left: 22px;
  display: flex;
  justify-content: space-between;
}
.controls button {
  justify-content: center;
  width: 76px;
  height: 76px;
  border-radius: 50%;
  background: rgba(232, 232, 232, 0.8);
}
.controls path {
  fill: none;
  stroke: #606060;
  stroke-width: 4;
}
.controls .faint { opacity: 0.25; }
.day-tag {
  position: absolute;
  right: 91px;
  bottom: 45px;
  gap: 18px;
  height: 37px;
  padding: 0 8px;
  border-radius: 3px;
  background: rgba(88, 154, 238, 0.9);
  color: #fff;
  font-size: 30px;
}
.to-latest {
  position: absolute;
  right: 23px;
  bottom: 3px;
  justify-content: center;
  width: 62px;
  height: 67px;
  border-radius: 12px;
  background: #fff;
  box-shadow: 0 0 8px rgba(0, 0, 0, 0.12);
}

.volume-labels {
  position: absolute;
  top: 12px;
  right: 36px;
  left: 26px;
  display: flex;
  flex-wrap: wrap;
  align-items: center;
  justify-content: space-between;
  font-size: 36px;
  font-weight: 500;
  line-height: 44px;
}
.volume-labels .chip {
  height: 50px;
  margin-right: -4px;
  padding: 0 12px;
  font-size: 38px;
  font-weight: 400;
}
.turnover {
  width: 100%;
  font-size: 38px;
  font-weight: 400;
  line-height: 36px;
}
.turnover span {
  color: #45a9ea;
  font-size: 36px;
  font-weight: 500;
}
.over { position: relative; }

.sheet-head {
  display: flex;
  align-items: center;
  gap: 28px;
  height: 70px;
  padding: 0 27px 0 15px;
  font-size: 30px;
  line-height: 44px;
}
.sheet-head p {
  display: flex;
  align-items: baseline;
  gap: 12px;
  margin: 0;
}
.sheet-head button { margin-left: auto; }
.scale {
  fill: #444;
  font-size: 36px;
}
.time {
  fill: #484848;
  font-size: 28px;
}
.day-nav {
  display: grid;
  grid-template-columns: 1fr 1fr;
  height: 101px;
  padding: 0 8px;
  font-size: 44px;
}
.day-nav button {
  justify-content: center;
  gap: 20px;
}

.system {
  display: grid;
  grid-template-columns: repeat(3, 1fr);
  height: 133px;
  padding: 0 145px 0 133px;
  background: #242424;
}
.system button { justify-content: center; }
</style>
